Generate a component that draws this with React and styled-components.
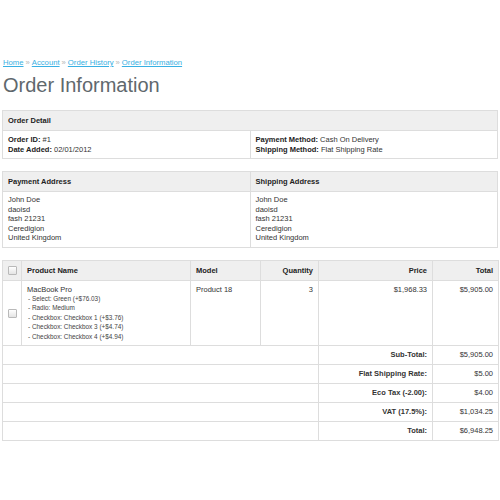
import React from 'react';
import styled, { createGlobalStyle } from 'styled-components';

const GlobalStyle = createGlobalStyle`
  body {
    margin: 0;
    background: #ffffff;
    font-family: "Liberation Sans", Arial, sans-serif;
    color: #222222;
  }
`;

const Page = styled.div`
  width: 496px;
  padding: 58px 2px 40px;
`;

const Breadcrumb = styled.div`
  font-size: 7.7px;
  line-height: 10px;
  padding-left: 1px;
  color: #aaaaaa;
`;

const Crumb = styled.a`
  color: #38b0e3;
  text-decoration: underline;
`;

const Sep = styled.span`
  margin: 0 2px;
  color: #b5b5b5;
`;

const Title = styled.h1`
  margin: 5px 0 13px 1px;
  font-size: 20px;
  line-height: 24px;
  font-weight: normal;
  color: #5f686d;
`;

const ListTable = styled.table`
  width: 496px;
  border-collapse: collapse;
  table-layout: fixed;
  border: 1px solid #dddddd;
  margin-bottom: 12px;
  font-size: 7.5px;
`;

const HeadCell = styled.td`
  background: #efefef;
  border: 1px solid #dddddd;
  padding: 5px;
  line-height: 9px;
  font-weight: bold;
  color: #222222;
  text-align: ${({ $align }) => $align || 'left'};
  white-space: nowrap;
`;

const Cell = styled.td`
  border: 1px solid #dddddd;
  padding: ${({ $pad }) => $pad || '4px 5px'};
  line-height: 9.5px;
  color: #333333;
  text-align: ${({ $align }) => $align || 'left'};
  vertical-align: top;
`;

const CheckCell = styled.td`
  border: 1px solid #dddddd;
  padding: 0;
  text-align: center;
  vertical-align: middle;
  background: ${({ $head }) => ($head ? '#efefef' : '#ffffff')};
`;

const Checkbox = styled.span`
  display: inline-block;
  width: 7px;
  height: 7px;
  border: 1px solid #b9b9b9;
  border-radius: 1px;
  background: linear-gradient(#ffffff, #e4e4e4);
  vertical-align: middle;
`;

const TotalCell = styled.td`
  border: 1px solid #dddddd;
  padding: 5px 5px;
  line-height: 8px;
  text-align: right;
  color: #333333;
  font-weight: ${({ $bold }) => ($bold ? 'bold' : 'normal')};
`;

const Strong = styled.b`
  color: #222222;
`;

const OptionLine = styled.div`
  font-size: 6.4px;
  line-height: 9.4px;
  padding-left: 1px;
  color: #444444;
`;

const paymentAddress = ['John Doe', 'daoisd', 'fash 21231', 'Ceredigion', 'United Kingdom'];

const options = [
  '- Select: Green (+$76.03)',
  '- Radio: Medium',
  '- Checkbox: Checkbox 1 (+$3.76)',
  '- Checkbox: Checkbox 3 (+$4.74)',
  '- Checkbox: Checkbox 4 (+$4.94)',
];

const totals = [
  ['Sub-Total', '$5,905.00'],
  ['Flat Shipping Rate', '$5.00'],
  ['Eco Tax (-2.00)', '$4.00'],
  ['VAT (17.5%)', '$1,034.25'],
  ['Total', '$6,948.25'],
];

const App = () => {
  return (
    <>
      <GlobalStyle />
      <Page>
        <Breadcrumb>
          <Crumb>Home</Crumb>
          <Sep>»</Sep>
          <Crumb>Account</Crumb>
          <Sep>»</Sep>
          <Crumb>Order History</Crumb>
          <Sep>»</Sep>
          <Crumb>Order Information</Crumb>
        </Breadcrumb>
        <Title>Order Information</Title>

        <ListTable>
          <tbody>
            <tr>
              <HeadCell colSpan={2}>Order Detail</HeadCell>
            </tr>
            <tr>
              <Cell style={{ width: '50%' }}>
                <Strong>Order ID:</Strong> #1
                <br />
                <Strong>Date Added:</Strong> 02/01/2012
              </Cell>
              <Cell>
                <Strong>Payment Method:</Strong> Cash On Delivery
                <br />
                <Strong>Shipping Method:</Strong> Flat Shipping Rate
              </Cell>
            </tr>
          </tbody>
        </ListTable>

        <ListTable>
          <tbody>
            <tr>
              <HeadCell>Payment Address</HeadCell>
              <HeadCell>Shipping Address</HeadCell>
            </tr>
            <tr>
              <Cell $pad="3px 5px 4px">
                {paymentAddress.map((line) => (
                  <div key={line}>{line}</div>
                ))}
              </Cell>
              <Cell $pad="3px 5px 4px">
                {paymentAddress.map((line) => (
                  <div key={line}>{line}</div>
                ))}
              </Cell>
            </tr>
          </tbody>
        </ListTable>

        <ListTable>
          <colgroup>
            <col style={{ width: 19 }} />
            <col style={{ width: 169 }} />
            <col style={{ width: 70 }} />
            <col style={{ width: 58 }} />
            <col style={{ width: 114 }} />
            <col style={{ width: 66 }} />
          </colgroup>
          <tbody>
            <tr>
              <CheckCell $head>
                <Checkbox />
              </CheckCell>
              <HeadCell>Product Name</HeadCell>
              <HeadCell>Model</HeadCell>
              <HeadCell $align="right">Quantity</HeadCell>
              <HeadCell $align="right">Price</HeadCell>
              <HeadCell $align="right">Total</HeadCell>
            </tr>
            <tr>
              <CheckCell>
                <Checkbox />
              </CheckCell>
              <Cell>
                <div>MacBook Pro</div>
                {options.map((o) => (
                  <OptionLine key={o}>{o}</OptionLine>
                ))}
              </Cell>
              <Cell>Product 18</Cell>
              <Cell $align="right">3</Cell>
              <Cell $align="right">$1,968.33</Cell>
              <Cell $align="right">$5,905.00</Cell>
            </tr>
            {totals.map(([label, value]) => (
              <tr key={label}>
                <TotalCell colSpan={4} />
                <TotalCell $bold>{label}:</TotalCell>
                <TotalCell>{value}</TotalCell>
              </tr>
            ))}
          </tbody>
        </ListTable>
      </Page>
    </>
  );
};

export default App;
